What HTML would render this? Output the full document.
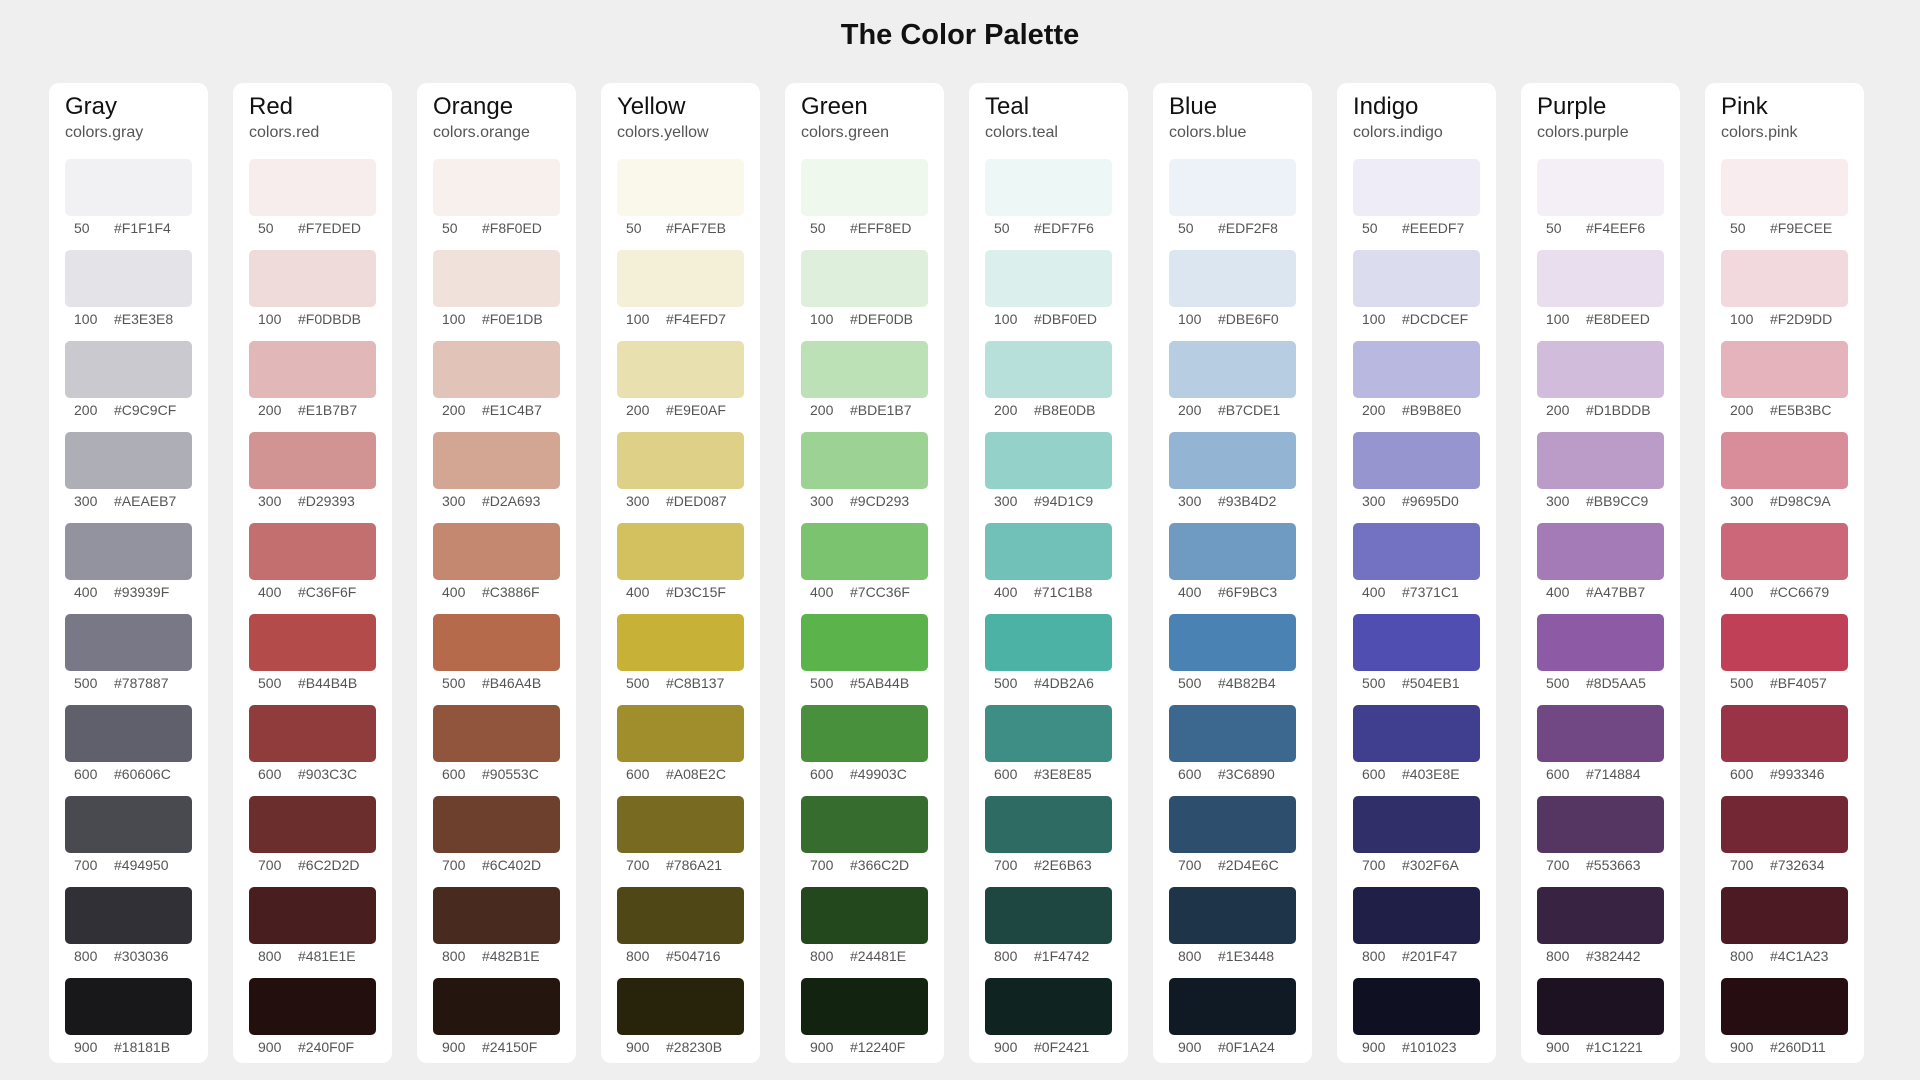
<!DOCTYPE html>
<html><head><meta charset="utf-8"><style>
*{margin:0;padding:0;box-sizing:border-box}
body{width:1920px;height:1080px;background:#efefef;font-family:"Liberation Sans",sans-serif;position:relative;overflow:hidden}
h1{position:absolute;top:19px;left:0;width:1920px;text-align:center;font-size:29px;font-weight:bold;color:#111}
.card{position:absolute;top:83px;width:159px;height:980px;background:#fff;border-radius:10px;padding:0 16px}
.n{margin-top:10px;font-size:24px;color:#111;height:28px;line-height:28px}
.c{font-size:16px;color:#555;margin-top:2px;height:24px;line-height:20px}
.s{height:57px;border-radius:5px;margin-top:0}
.sw{margin-top:12px}
.l{height:34px;line-height:25px;font-size:14px;color:#555;position:relative}
.l span{position:absolute;left:9px}
.l b{position:absolute;left:49px;font-weight:normal}
</style></head><body>
<h1>The Color Palette</h1>

<div class="card" style="left:49px"><div class="n">Gray</div><div class="c">colors.gray</div><div class="sw">
<div class="s" style="background:#F1F1F4"></div><div class="l"><span>50</span><b>#F1F1F4</b></div>
<div class="s" style="background:#E3E3E8"></div><div class="l"><span>100</span><b>#E3E3E8</b></div>
<div class="s" style="background:#C9C9CF"></div><div class="l"><span>200</span><b>#C9C9CF</b></div>
<div class="s" style="background:#AEAEB7"></div><div class="l"><span>300</span><b>#AEAEB7</b></div>
<div class="s" style="background:#93939F"></div><div class="l"><span>400</span><b>#93939F</b></div>
<div class="s" style="background:#787887"></div><div class="l"><span>500</span><b>#787887</b></div>
<div class="s" style="background:#60606C"></div><div class="l"><span>600</span><b>#60606C</b></div>
<div class="s" style="background:#494950"></div><div class="l"><span>700</span><b>#494950</b></div>
<div class="s" style="background:#303036"></div><div class="l"><span>800</span><b>#303036</b></div>
<div class="s" style="background:#18181B"></div><div class="l"><span>900</span><b>#18181B</b></div>
</div></div>

<div class="card" style="left:233px"><div class="n">Red</div><div class="c">colors.red</div><div class="sw">
<div class="s" style="background:#F7EDED"></div><div class="l"><span>50</span><b>#F7EDED</b></div>
<div class="s" style="background:#F0DBDB"></div><div class="l"><span>100</span><b>#F0DBDB</b></div>
<div class="s" style="background:#E1B7B7"></div><div class="l"><span>200</span><b>#E1B7B7</b></div>
<div class="s" style="background:#D29393"></div><div class="l"><span>300</span><b>#D29393</b></div>
<div class="s" style="background:#C36F6F"></div><div class="l"><span>400</span><b>#C36F6F</b></div>
<div class="s" style="background:#B44B4B"></div><div class="l"><span>500</span><b>#B44B4B</b></div>
<div class="s" style="background:#903C3C"></div><div class="l"><span>600</span><b>#903C3C</b></div>
<div class="s" style="background:#6C2D2D"></div><div class="l"><span>700</span><b>#6C2D2D</b></div>
<div class="s" style="background:#481E1E"></div><div class="l"><span>800</span><b>#481E1E</b></div>
<div class="s" style="background:#240F0F"></div><div class="l"><span>900</span><b>#240F0F</b></div>
</div></div>

<div class="card" style="left:417px"><div class="n">Orange</div><div class="c">colors.orange</div><div class="sw">
<div class="s" style="background:#F8F0ED"></div><div class="l"><span>50</span><b>#F8F0ED</b></div>
<div class="s" style="background:#F0E1DB"></div><div class="l"><span>100</span><b>#F0E1DB</b></div>
<div class="s" style="background:#E1C4B7"></div><div class="l"><span>200</span><b>#E1C4B7</b></div>
<div class="s" style="background:#D2A693"></div><div class="l"><span>300</span><b>#D2A693</b></div>
<div class="s" style="background:#C3886F"></div><div class="l"><span>400</span><b>#C3886F</b></div>
<div class="s" style="background:#B46A4B"></div><div class="l"><span>500</span><b>#B46A4B</b></div>
<div class="s" style="background:#90553C"></div><div class="l"><span>600</span><b>#90553C</b></div>
<div class="s" style="background:#6C402D"></div><div class="l"><span>700</span><b>#6C402D</b></div>
<div class="s" style="background:#482B1E"></div><div class="l"><span>800</span><b>#482B1E</b></div>
<div class="s" style="background:#24150F"></div><div class="l"><span>900</span><b>#24150F</b></div>
</div></div>

<div class="card" style="left:601px"><div class="n">Yellow</div><div class="c">colors.yellow</div><div class="sw">
<div class="s" style="background:#FAF7EB"></div><div class="l"><span>50</span><b>#FAF7EB</b></div>
<div class="s" style="background:#F4EFD7"></div><div class="l"><span>100</span><b>#F4EFD7</b></div>
<div class="s" style="background:#E9E0AF"></div><div class="l"><span>200</span><b>#E9E0AF</b></div>
<div class="s" style="background:#DED087"></div><div class="l"><span>300</span><b>#DED087</b></div>
<div class="s" style="background:#D3C15F"></div><div class="l"><span>400</span><b>#D3C15F</b></div>
<div class="s" style="background:#C8B137"></div><div class="l"><span>500</span><b>#C8B137</b></div>
<div class="s" style="background:#A08E2C"></div><div class="l"><span>600</span><b>#A08E2C</b></div>
<div class="s" style="background:#786A21"></div><div class="l"><span>700</span><b>#786A21</b></div>
<div class="s" style="background:#504716"></div><div class="l"><span>800</span><b>#504716</b></div>
<div class="s" style="background:#28230B"></div><div class="l"><span>900</span><b>#28230B</b></div>
</div></div>

<div class="card" style="left:785px"><div class="n">Green</div><div class="c">colors.green</div><div class="sw">
<div class="s" style="background:#EFF8ED"></div><div class="l"><span>50</span><b>#EFF8ED</b></div>
<div class="s" style="background:#DEF0DB"></div><div class="l"><span>100</span><b>#DEF0DB</b></div>
<div class="s" style="background:#BDE1B7"></div><div class="l"><span>200</span><b>#BDE1B7</b></div>
<div class="s" style="background:#9CD293"></div><div class="l"><span>300</span><b>#9CD293</b></div>
<div class="s" style="background:#7CC36F"></div><div class="l"><span>400</span><b>#7CC36F</b></div>
<div class="s" style="background:#5AB44B"></div><div class="l"><span>500</span><b>#5AB44B</b></div>
<div class="s" style="background:#49903C"></div><div class="l"><span>600</span><b>#49903C</b></div>
<div class="s" style="background:#366C2D"></div><div class="l"><span>700</span><b>#366C2D</b></div>
<div class="s" style="background:#24481E"></div><div class="l"><span>800</span><b>#24481E</b></div>
<div class="s" style="background:#12240F"></div><div class="l"><span>900</span><b>#12240F</b></div>
</div></div>

<div class="card" style="left:969px"><div class="n">Teal</div><div class="c">colors.teal</div><div class="sw">
<div class="s" style="background:#EDF7F6"></div><div class="l"><span>50</span><b>#EDF7F6</b></div>
<div class="s" style="background:#DBF0ED"></div><div class="l"><span>100</span><b>#DBF0ED</b></div>
<div class="s" style="background:#B8E0DB"></div><div class="l"><span>200</span><b>#B8E0DB</b></div>
<div class="s" style="background:#94D1C9"></div><div class="l"><span>300</span><b>#94D1C9</b></div>
<div class="s" style="background:#71C1B8"></div><div class="l"><span>400</span><b>#71C1B8</b></div>
<div class="s" style="background:#4DB2A6"></div><div class="l"><span>500</span><b>#4DB2A6</b></div>
<div class="s" style="background:#3E8E85"></div><div class="l"><span>600</span><b>#3E8E85</b></div>
<div class="s" style="background:#2E6B63"></div><div class="l"><span>700</span><b>#2E6B63</b></div>
<div class="s" style="background:#1F4742"></div><div class="l"><span>800</span><b>#1F4742</b></div>
<div class="s" style="background:#0F2421"></div><div class="l"><span>900</span><b>#0F2421</b></div>
</div></div>

<div class="card" style="left:1153px"><div class="n">Blue</div><div class="c">colors.blue</div><div class="sw">
<div class="s" style="background:#EDF2F8"></div><div class="l"><span>50</span><b>#EDF2F8</b></div>
<div class="s" style="background:#DBE6F0"></div><div class="l"><span>100</span><b>#DBE6F0</b></div>
<div class="s" style="background:#B7CDE1"></div><div class="l"><span>200</span><b>#B7CDE1</b></div>
<div class="s" style="background:#93B4D2"></div><div class="l"><span>300</span><b>#93B4D2</b></div>
<div class="s" style="background:#6F9BC3"></div><div class="l"><span>400</span><b>#6F9BC3</b></div>
<div class="s" style="background:#4B82B4"></div><div class="l"><span>500</span><b>#4B82B4</b></div>
<div class="s" style="background:#3C6890"></div><div class="l"><span>600</span><b>#3C6890</b></div>
<div class="s" style="background:#2D4E6C"></div><div class="l"><span>700</span><b>#2D4E6C</b></div>
<div class="s" style="background:#1E3448"></div><div class="l"><span>800</span><b>#1E3448</b></div>
<div class="s" style="background:#0F1A24"></div><div class="l"><span>900</span><b>#0F1A24</b></div>
</div></div>

<div class="card" style="left:1337px"><div class="n">Indigo</div><div class="c">colors.indigo</div><div class="sw">
<div class="s" style="background:#EEEDF7"></div><div class="l"><span>50</span><b>#EEEDF7</b></div>
<div class="s" style="background:#DCDCEF"></div><div class="l"><span>100</span><b>#DCDCEF</b></div>
<div class="s" style="background:#B9B8E0"></div><div class="l"><span>200</span><b>#B9B8E0</b></div>
<div class="s" style="background:#9695D0"></div><div class="l"><span>300</span><b>#9695D0</b></div>
<div class="s" style="background:#7371C1"></div><div class="l"><span>400</span><b>#7371C1</b></div>
<div class="s" style="background:#504EB1"></div><div class="l"><span>500</span><b>#504EB1</b></div>
<div class="s" style="background:#403E8E"></div><div class="l"><span>600</span><b>#403E8E</b></div>
<div class="s" style="background:#302F6A"></div><div class="l"><span>700</span><b>#302F6A</b></div>
<div class="s" style="background:#201F47"></div><div class="l"><span>800</span><b>#201F47</b></div>
<div class="s" style="background:#101023"></div><div class="l"><span>900</span><b>#101023</b></div>
</div></div>

<div class="card" style="left:1521px"><div class="n">Purple</div><div class="c">colors.purple</div><div class="sw">
<div class="s" style="background:#F4EEF6"></div><div class="l"><span>50</span><b>#F4EEF6</b></div>
<div class="s" style="background:#E8DEED"></div><div class="l"><span>100</span><b>#E8DEED</b></div>
<div class="s" style="background:#D1BDDB"></div><div class="l"><span>200</span><b>#D1BDDB</b></div>
<div class="s" style="background:#BB9CC9"></div><div class="l"><span>300</span><b>#BB9CC9</b></div>
<div class="s" style="background:#A47BB7"></div><div class="l"><span>400</span><b>#A47BB7</b></div>
<div class="s" style="background:#8D5AA5"></div><div class="l"><span>500</span><b>#8D5AA5</b></div>
<div class="s" style="background:#714884"></div><div class="l"><span>600</span><b>#714884</b></div>
<div class="s" style="background:#553663"></div><div class="l"><span>700</span><b>#553663</b></div>
<div class="s" style="background:#382442"></div><div class="l"><span>800</span><b>#382442</b></div>
<div class="s" style="background:#1C1221"></div><div class="l"><span>900</span><b>#1C1221</b></div>
</div></div>

<div class="card" style="left:1705px"><div class="n">Pink</div><div class="c">colors.pink</div><div class="sw">
<div class="s" style="background:#F9ECEE"></div><div class="l"><span>50</span><b>#F9ECEE</b></div>
<div class="s" style="background:#F2D9DD"></div><div class="l"><span>100</span><b>#F2D9DD</b></div>
<div class="s" style="background:#E5B3BC"></div><div class="l"><span>200</span><b>#E5B3BC</b></div>
<div class="s" style="background:#D98C9A"></div><div class="l"><span>300</span><b>#D98C9A</b></div>
<div class="s" style="background:#CC6679"></div><div class="l"><span>400</span><b>#CC6679</b></div>
<div class="s" style="background:#BF4057"></div><div class="l"><span>500</span><b>#BF4057</b></div>
<div class="s" style="background:#993346"></div><div class="l"><span>600</span><b>#993346</b></div>
<div class="s" style="background:#732634"></div><div class="l"><span>700</span><b>#732634</b></div>
<div class="s" style="background:#4C1A23"></div><div class="l"><span>800</span><b>#4C1A23</b></div>
<div class="s" style="background:#260D11"></div><div class="l"><span>900</span><b>#260D11</b></div>
</div></div>

</body></html>
